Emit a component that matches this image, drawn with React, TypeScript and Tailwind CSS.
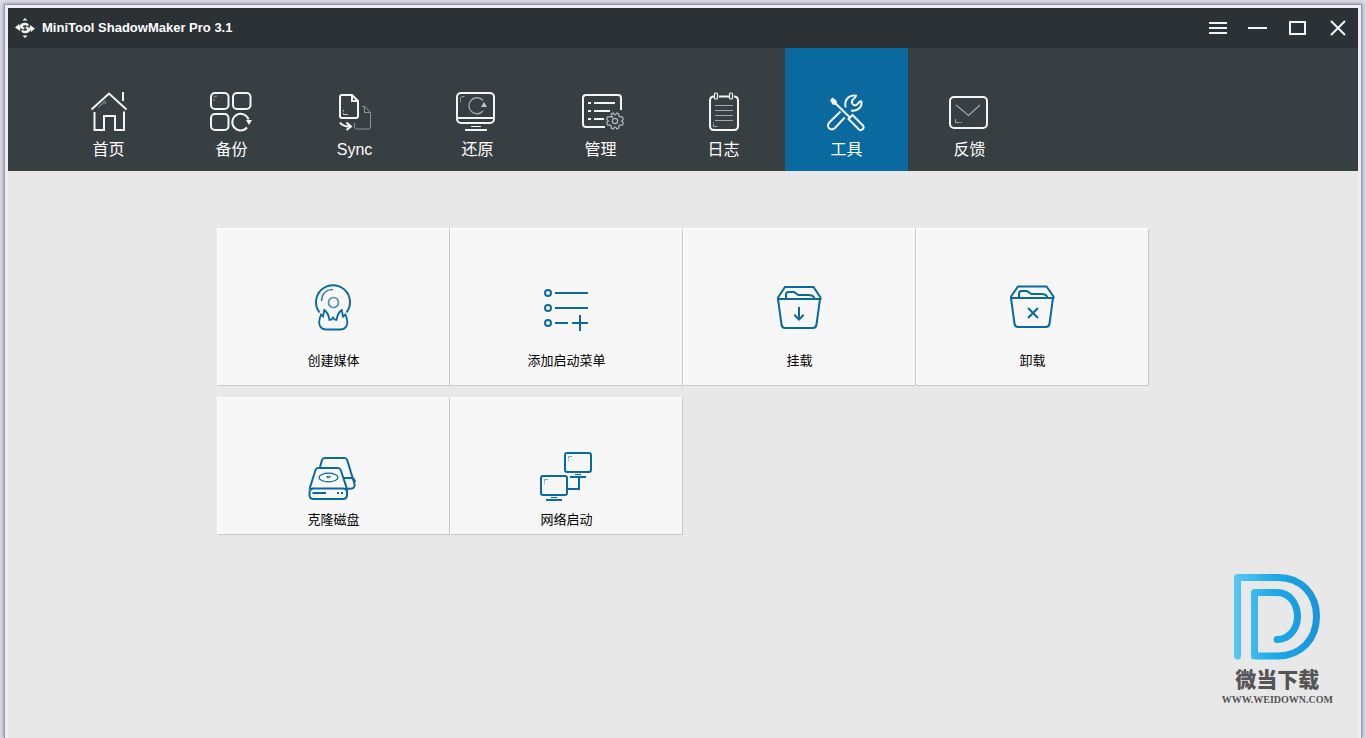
import React from 'react';
import { clsx } from 'clsx';

interface IconProps {
  children: React.ReactNode;
}

function NavIcon({ children }: IconProps) {
  return (
    <svg
      viewBox="0 0 49 48"
      className="w-[49px] h-12 shrink-0"
      fill="none"
      stroke="#f3f4f4"
      strokeWidth="2"
      aria-hidden="true"
    >
      {children}
    </svg>
  );
}

function ToolIcon({ children }: IconProps) {
  return (
    <svg
      viewBox="0 0 55 56"
      className="w-[55px] h-14 shrink-0"
      fill="none"
      stroke="#0a6a9f"
      strokeWidth="2"
      aria-hidden="true"
    >
      {children}
    </svg>
  );
}

const navItems = [
  {
    id: 'home',
    label: '首页',
    icon: (
      <NavIcon>
        <path d="M7.500 21.500 25 5.500l17.500 16M39 4v9" />
        <path d="M10.500 24v18H20V28h11v14h9V23.500" />
        <path d="m14.500 19.500 7-7M20 16.500l2.500-2.500" stroke="#a3a7a9" strokeWidth="1" />
      </NavIcon>
    ),
  },
  {
    id: 'backup',
    label: '备份',
    icon: (
      <NavIcon>
        <rect x="4" y="5" width="17.500" height="16" rx="4" />
        <rect x="26" y="5" width="17.500" height="16" rx="4" />
        <rect x="4" y="26" width="17.500" height="16" rx="4" />
        <path d="M41.500 31.500A8.300 8.300 0 1 0 40 39.500" />
        <path d="M39 32h6l-3 5z" fill="#f3f4f4" stroke="none" />
        <path d="M7 13v-2M7 9.500q0-1.500 3-1.500" stroke="#a3a7a9" strokeWidth="1" />
      </NavIcon>
    ),
  },
  {
    id: 'sync',
    label: 'Sync',
    icon: (
      <NavIcon>
        <path d="M12 7h10l6 6v15q0 2-2 2H12q-2 0-2-2V9q0-2 2-2zM22 7v6h6" />
        <path d="M13.500 22v1.500M13.500 25v1.500H18" stroke="#c3c6c7" strokeWidth="1" />
        <path d="M32 18.500h3l5.500 6V39q0 2-2 2H26.500q-2 0-2-2v-4M34.500 18.500v6h6" stroke="#8f9496" strokeWidth="1" />
        <path d="M10 34.500q2.500 4 10 4M16.500 34.500l4.500 4-4.500 3.500" />
      </NavIcon>
    ),
  },
  {
    id: 'restore',
    label: '还原',
    icon: (
      <NavIcon>
        <rect x="4" y="5" width="37" height="30" rx="4" />
        <path d="M4 30h37M12 42h22" />
        <path d="M18 38.500h10" strokeWidth="1" />
        <path d="M30 12.500A8 8 0 1 0 30 23" stroke="#a3a7a9" strokeWidth="1.300" />
        <path d="M28 19h6l-3-5z" fill="#c3c6c7" stroke="none" />
        <path d="M7.500 14v-1.500M7.500 11.500V9.500q0-1 4-1" stroke="#a3a7a9" strokeWidth="1" />
      </NavIcon>
    ),
  },
  {
    id: 'manage',
    label: '管理',
    icon: (
      <NavIcon>
        <path d="M45 22V10q0-3-3-3H10q-3 0-3 3v26q0 3 3 3h19" />
        <path d="M12 15h3M18 15h21M12 23h3M18 23h16M12 31h3M18 31h10" />
        <g transform="translate(39 33) scale(.88) translate(-39 -33)" stroke="#b5b9ba" strokeWidth="1.400">
          <path d="M36.300 28.300 35 26.500q-1-1.500.5-2l1.500-.5q1 2 2 2t2-2l1.500.5q1.500.5.5 2l1.200 1.800h3l1.300 2.200q0 1-2 2.500 2 1.500 2 2.500l-1.300 2.200h-3l-1.200 1.800q1 1.500-.5 2l-1.500.5q-1-2-2-2t-2 2l-1.500-.5q-1.500-.5-.5-2l-1.200-1.800h-3L29.500 35.500q0-1 2-2.500-2-1.500-2-2.500l1.300-2.200z" />
          <circle cx="39" cy="33" r="3" />
        </g>
      </NavIcon>
    ),
  },
  {
    id: 'log',
    label: '日志',
    icon: (
      <NavIcon>
        <path d="M15 8.500q-4 0-4 4V38q0 4 4 4h20q4 0 4-4V12.500q0-4-4-4M20 8.500h10" />
        <rect x="15.500" y="5" width="3" height="6" rx="1" strokeWidth="1.200" />
        <rect x="30.500" y="5" width="3" height="6" rx="1" strokeWidth="1.200" />
        <path d="M16 17.500h18M16 22.500h18M16 27.500h18M16 32.500h18" stroke="#a3a7a9" strokeWidth="1" />
        <path d="M14.500 34v1M14.500 36v2.500h4" stroke="#a3a7a9" strokeWidth="1" />
      </NavIcon>
    ),
  },
  {
    id: 'tools',
    label: '工具',
    icon: (
      <NavIcon>
        <path d="M12 14 28.500 30" />
        <path d="m8 12 2.500-2.500 4 3 .5 3-1.500 1.500-3-.5z" fill="#f3f4f4" stroke="none" />
        <path d="m26.500 31 4-4L41 37.500q1.500 2-.5 3.700-1.700 2-3.500.3z" />
        <path d="M23.700 19.500q-1.500-5.500 2-9.500 3.500-3.500 8.300-2.200-.3 1.700-3 3.700-2 2-.5 4.500 2 2.500 4.500.5l3-3.200q1.200-.5 1.500.5.5 3.500-2 6.200-3 3.300-8.500 2.500" />
        <path d="M18.500 23.500 7.300 34.500q-2.500 3-.3 5.700 3 2.500 6-.2l9.700-10.500" />
      </NavIcon>
    ),
  },
  {
    id: 'feedback',
    label: '反馈',
    icon: (
      <NavIcon>
        <rect x="5" y="9" width="37" height="31" rx="4" />
        <path d="m11 17 12.500 10.500L35 17" stroke="#a3a7a9" strokeWidth="1.200" />
        <path d="M10.500 31v3.500h4M15.500 34.500H17" stroke="#a3a7a9" strokeWidth="1" />
      </NavIcon>
    ),
  },
];

const mediaTools = [
  {
    label: '创建媒体',
    icon: (
      <ToolIcon>
        <path d="M13.500 33.500A17 17 0 1 1 40.500 33.500" />
        <circle cx="27.500" cy="23.500" r="5" stroke="#4d93ba" strokeWidth="1.700" />
        <path d="M15.500 22Q16 11 27 10.500" strokeWidth="1.200" />
        <path d="M15 35.500q-3 8-1 11.500 2 3.500 6 3.500h14.500q4 0 6-3.500 2-3.500-1-11.500l-2.500 2-1.300-6.500q-4.200 3-5.200 10l-2-.500-1.500-2-1.500 2-2 .500q-1-7-5.200-10L17 37.500z" strokeWidth="1.800" />
      </ToolIcon>
    ),
  },
  {
    label: '添加启动菜单',
    icon: (
      <ToolIcon>
        <circle cx="9" cy="14" r="3" />
        <circle cx="9" cy="29" r="3" />
        <circle cx="9" cy="44" r="3" />
        <path d="M16 14h33M16 29h33M16 44h13M33 44h16M41 36v16" />
      </ToolIcon>
    ),
  },
  {
    label: '挂载',
    icon: (
      <ToolIcon>
        <path d="M6 20v-1.500L13 8h28.500L48.500 18.500V20z" />
        <path d="m6 20 3.500 25.500q.5 3.500 3.500 3.500h28q3 0 3.500-3.500L48 20" />
        <path d="M14 19v-3.500q0-2.500 2.500-2.500H21q1.500 0 2.500 1t3 2h10q5 0 6 3.500" />
        <path d="M27 28v12M22.300 35.800l4.700 4.700 4.700-4.700" />
      </ToolIcon>
    ),
  },
  {
    label: '卸载',
    icon: (
      <ToolIcon>
        <path d="M6 19v-1.500L13 7.500h28.500L48.500 17.500V19z" />
        <path d="m6 19 3.500 25.500q.5 3.500 3.500 3.500h28q3 0 3.500-3.500L48 19" />
        <path d="M14 18v-3.500q0-2.500 2.500-2.500H21q1.500 0 2.500 1t3 2h10q5 0 6 3.500" />
        <path d="m23 29 10 10M33 29 23 39" />
      </ToolIcon>
    ),
  },
];

const diskTools = [
  {
    label: '克隆磁盘',
    icon: (
      <ToolIcon>
        <path d="M14 16 16 9q.8-2 2.500-2h20q2 0 2.700 2l7.300 24q1 4.500-4 4.700h-3M37 27h8q3.500 0 4 4" />
        <path d="m3.500 38 6-19q.7-2 2.500-2h20q2 0 2.700 2L41 38v6q0 4-4 4H7.500q-4 0-4-4v-2q0-4.500 4-4.500H37q4 0 4 4" />
        <ellipse cx="22.500" cy="26.500" rx="9.500" ry="4.300" strokeWidth="1.200" />
        <ellipse cx="22.500" cy="26" rx="2" ry=".7" strokeWidth="1" />
        <path d="M6.500 42H20M31 42h2M35 42h2" />
      </ToolIcon>
    ),
  },
  {
    label: '网络启动',
    icon: (
      <ToolIcon>
        <rect x="26" y="2" width="26" height="19" rx="2" />
        <rect x="2" y="25" width="26" height="19" rx="2" />
        <path d="M31 26h16M7 49h16M40 26v12H28" />
        <path d="M36 23.500h6M12 46.500h6" strokeWidth="1" />
        <path d="M29.500 10V9M29.500 8V5.500H33M5.500 33v-1M5.500 31v-2.500H9" stroke="#6aa6c8" strokeWidth="1" />
      </ToolIcon>
    ),
  },
];

const windowControls = [
  { label: 'Menu', path: 'M1 5h18M1 10h18M1 15h18' },
  { label: 'Minimize', path: 'M0 10h19' },
  { label: 'Maximize', path: 'M2 4h15v12H2z' },
  { label: 'Close', path: 'm3 3 14 14M17 3 3 17' },
];

interface ToolCardProps {
  label: string;
  icon: React.ReactNode;
  compact?: boolean;
}

function ToolCard({ label, icon, compact = false }: ToolCardProps) {
  return (
    <button
      type="button"
      className={clsx(
        'flex flex-col items-center bg-[#f7f7f7] hover:bg-white border border-t-white border-l-white border-r-[#c8c8c8] border-b-[#c8c8c8] text-[13px] leading-5 text-black',
        compact ? 'pt-[53px] pb-1 gap-[3px]' : 'pt-[50px] pb-3.5 gap-4'
      )}
    >
      {icon}
      {label}
    </button>
  );
}

function Watermark() {
  return (
    <div className="absolute right-7 bottom-[30px] flex flex-col items-center text-[#555]">
      <svg viewBox="0 0 88 90" className="w-[88px] h-[90px] mb-1.5" fill="none" strokeWidth="7" strokeLinecap="round" strokeLinejoin="round" aria-hidden="true">
        <defs>
          <linearGradient id="brand" x1="0" y1="0" x2="88" y2="0" gradientUnits="userSpaceOnUse">
            <stop offset="0" stopColor="#5cc8f3" />
            <stop offset=".5" stopColor="#1ca7e6" />
            <stop offset="1" stopColor="#1b94d6" />
          </linearGradient>
        </defs>
        <path d="M4.500 84V5.500H45C68 5.500 83.500 22 83.500 44.500S68 84 45 84H21.500V20.500H44C56 20.500 64.500 31 64.500 44.500S55 67.500 44 67.500" stroke="url(#brand)" />
      </svg>
      <div className="text-[21px] leading-6 font-black">微当下载</div>
      <div className="font-['Liberation_Serif',serif] text-[10px] leading-4 font-bold">WWW.WEIDOWN.COM</div>
    </div>
  );
}

export default function App() {
  const activeTab = 'tools';

  return (
    <div className="min-h-screen flex flex-col px-1 pt-1 bg-[#dadae2] overflow-hidden font-['Liberation_Sans','Noto_Sans_CJK_SC',sans-serif]">
      <div className="relative flex-1 flex flex-col px-[3px] pt-[3px] bg-[#efeef1] border-x border-t border-[#9494b4] shadow-[0_0_4px_#8080a8]">
        {/* Title bar */}
        <header className="h-10 flex items-center justify-between pl-[7px] bg-[#2c3135] text-white">
          <div className="flex items-center gap-[7px]">
            <svg viewBox="0 0 20 20" className="w-5 h-5" fill="#f3f4f4" aria-hidden="true">
              <path d="M10 0 12.500 2.500h-5zM10 20l2.500-2.500h-5z" />
              <path d="m0 9.500 4-3.500.5 2Q6 4.800 10 4.800q2.500 0 4 2l-1.500 1.500q-1-1-2.500-1-2 0-2 1.200t2 1.300L8.500 11.500Q6 11 5.500 9.500L5 13zM20 10.500l-4 3.500-.5-2q-1.500 3.200-5.500 3.200-2.500 0-4-2l1.500-1.500q1 1 2.500 1 2 0 2-1.200T10 10.200l1.500-1.700Q14 9 14.500 10.500L15 7z" />
            </svg>
            <h1 className="text-[13px] leading-5 font-bold">MiniTool ShadowMaker Pro 3.1</h1>
          </div>
          <div className="flex">
            {windowControls.map((control) => (
              <button key={control.label} type="button" aria-label={control.label} className="w-10 h-10 flex items-center justify-center hover:bg-white/10">
                <svg viewBox="0 0 20 20" className="w-5 h-5" fill="none" stroke="#f3f4f4" strokeWidth="2" aria-hidden="true">
                  <path d={control.path} />
                </svg>
              </button>
            ))}
          </div>
        </header>

        {/* Navigation */}
        <nav className="flex pl-[39px] bg-[#383f42]">
          {navItems.map((item) => (
            <a
              key={item.id}
              href={`#${item.id}`}
              className={clsx(
                'w-[123px] flex flex-col items-center pt-10 pb-[9px] gap-[2px] text-base leading-6 text-white',
                item.id === activeTab ? 'bg-[#0a6a9f]' : 'hover:bg-white/5'
              )}
            >
              {item.icon}
              {item.label}
            </a>
          ))}
        </nav>

        {/* Tools */}
        <main className="flex-1 px-6 pt-[57px] bg-[#e8e8e8]">
          <div className="max-w-[932px] mx-auto flex flex-col gap-[11px]">
            <div className="grid grid-cols-4">
              {mediaTools.map((tool) => (
                <ToolCard key={tool.label} label={tool.label} icon={tool.icon} />
              ))}
            </div>
            <div className="grid grid-cols-4">
              {diskTools.map((tool) => (
                <ToolCard key={tool.label} label={tool.label} icon={tool.icon} compact />
              ))}
            </div>
          </div>
        </main>

        <Watermark />
      </div>
    </div>
  );
}
